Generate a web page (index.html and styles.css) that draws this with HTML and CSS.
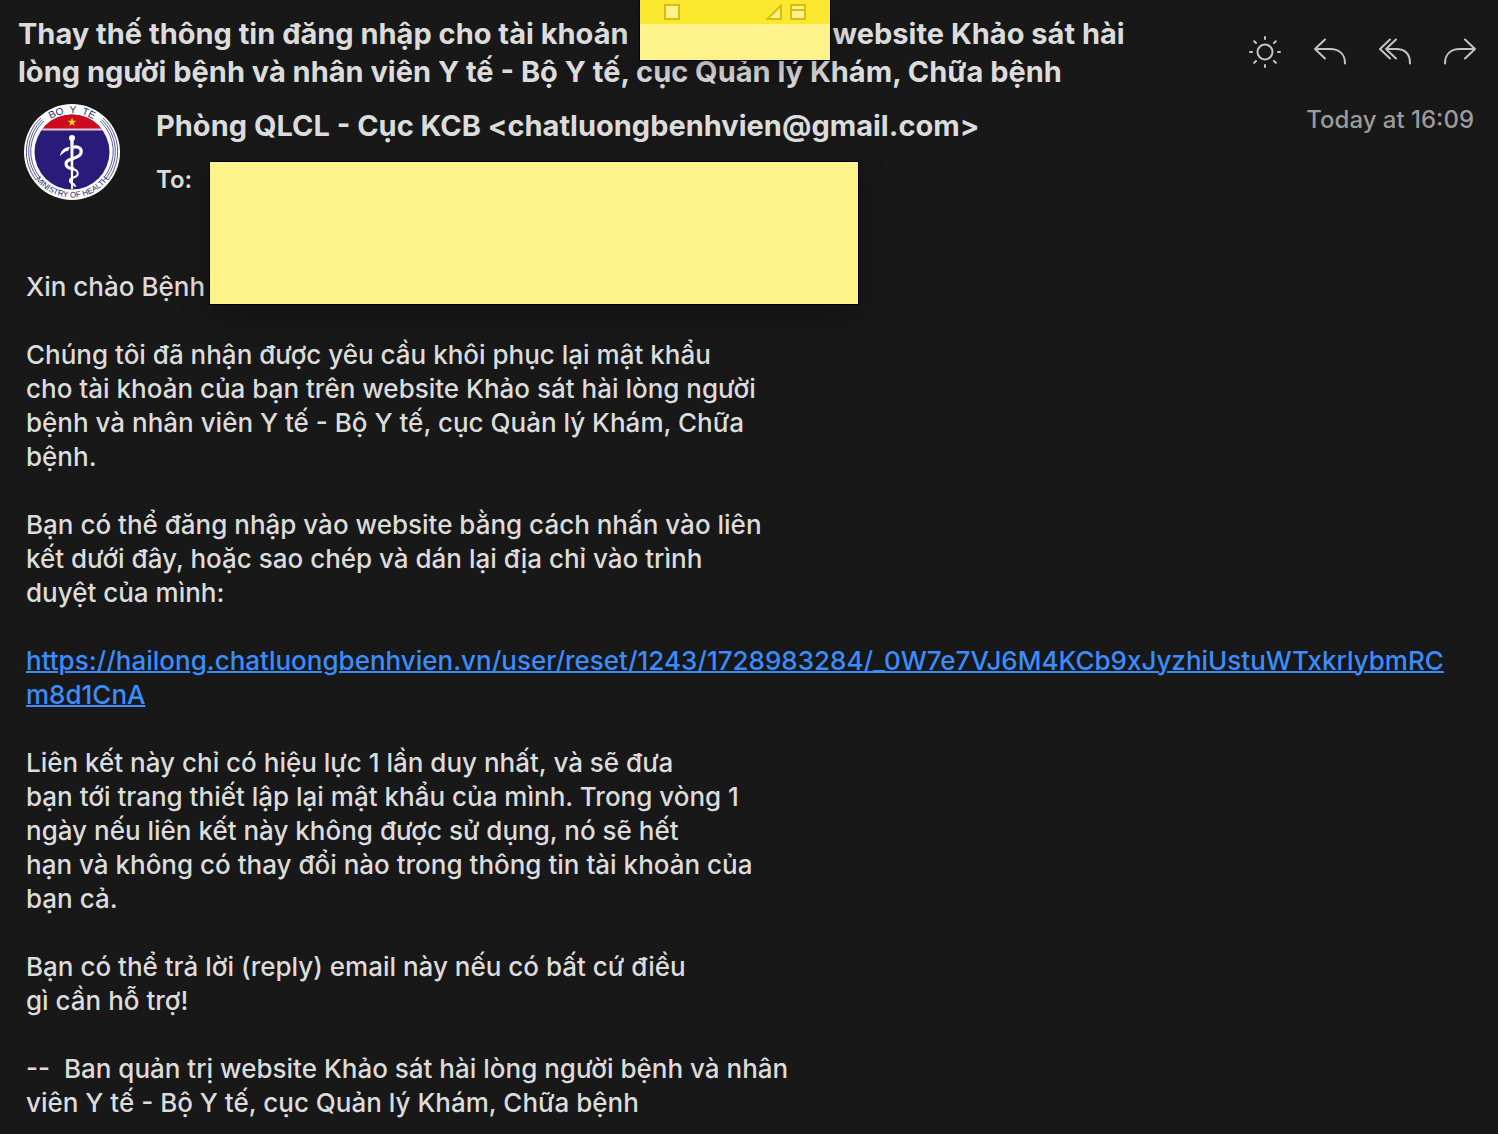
FILE: index.html
```html
<!DOCTYPE html>
<html lang="vi">
<head>
  <meta charset="UTF-8">
  <meta name="viewport" content="width=device-width, initial-scale=1.0">
  <title>Thay thế thông tin đăng nhập</title>
  <link rel="stylesheet" href="styles.css">
</head>
<body>
  <!-- Message header -->
  <header class="header">
    <div class="top">
      <h1 class="subject">Thay thế thông tin đăng nhập cho tài khoản<span class="gap"></span>website Khảo sát hài<br>lòng người bệnh và nhân viên Y tế - Bộ Y tế, cục Quản lý Khám, Chữa bệnh</h1>
      <div class="actions">
        <button type="button" aria-label="Light mode">
          <svg width="32" height="32" viewBox="0 0 32 32">
            <circle cx="16" cy="16" r="7.5"/>
            <path d="M16 1v2M16 29v2M1 16h2M29 16h2M5.200 5.200l1.800 1.800M25 25l1.800 1.800M5.200 26.800L7 25M25 7l1.800-1.800"/>
          </svg>
        </button>
        <button type="button" aria-label="Reply">
          <svg width="32" height="32" viewBox="0 0 32 32">
            <path d="M11 3.500L1 13l10 9.500M1 13h15c9 0 15 5 15 14.500"/>
          </svg>
        </button>
        <button type="button" aria-label="Reply all">
          <svg width="32" height="32" viewBox="0 0 32 32">
            <path d="M11 3.500L1 13l10 9.500M17 3.500L7 13l10 9.500M7 13h10c9 0 14 5 14 14.500"/>
          </svg>
        </button>
        <button type="button" aria-label="Forward">
          <svg width="32" height="32" viewBox="0 0 32 32">
            <path d="M21 3.500L31 13l-10 9.500M31 13H16C7 13 1 18 1 27.500"/>
          </svg>
        </button>
      </div>
    </div>

    <div class="meta">
      <svg class="avatar" width="96" height="96" viewBox="0 0 96 96" role="img" aria-label="Ministry of Health">
        <defs>
          <clipPath id="disc"><circle cx="48" cy="48" r="37.5"/></clipPath>
          <path id="arc-top" d="M9 48a39 39 0 0 1 78 0"/>
          <path id="arc-bottom" d="M2.500 48a45.500 45.500 0 0 0 91 0"/>
        </defs>
        <circle cx="48" cy="48" r="48" fill="#fff"/>
        <g fill="none" stroke="#5a5d9e" stroke-width="1">
          <path d="M17 14a46 46 0 0 0-5 62M18.500 15.500a43.700 43.700 0 0 0-4.500 59M20 17a41.400 41.400 0 0 0-4 56.500"/>
          <path d="M79 14a46 46 0 0 1 5 62M77.500 15.500a43.700 43.700 0 0 1 4.500 59M76 17a41.400 41.400 0 0 1 4 56.500"/>
        </g>
        <circle cx="48" cy="48" r="37.500" fill="#2a1a7a"/>
        <g clip-path="url(#disc)">
          <rect x="8" y="8" width="80" height="17" fill="#cf0a1e"/>
          <rect x="8" y="24.500" width="80" height="2" fill="#d9c9dd"/>
        </g>
        <path d="M48 13.500l1.100 3.200h3.300l-2.700 2 1 3.200-2.700-2-2.700 2 1-3.200-2.700-2h3.300z" fill="#ffe11a"/>
        <circle cx="48" cy="34" r="3" fill="#fff"/>
        <path d="M46.300 35h3.400l-.8 50h-1.800z" fill="#fff"/>
        <path d="M36 52c1-6 5-9 10-9l-2 4c-3 0-5 2-8 5z" fill="#fff"/>
        <path d="M50 43c5-1 8 2 7 6-1 6-15 5-15 10.500 0 4 4 5 7 5" fill="none" stroke="#fff" stroke-width="3.200" stroke-linecap="round"/>
        <path d="M49 65.500c5 0 6 5 3 7-3 1.500-7 1-6 5 .5 2 4 1.500 5 4.500" fill="none" stroke="#fff" stroke-width="2" stroke-linecap="round"/>
        <text class="seal-top"><textPath href="#arc-top" startOffset="50%">BO&nbsp; Y&nbsp; TE</textPath></text>
        <text class="seal-bottom"><textPath href="#arc-bottom" startOffset="50%">MINISTRY OF HEALTH</textPath></text>
      </svg>
      <div class="people">
        <p class="sender">Phòng QLCL - Cục KCB &lt;chatluongbenhvien@gmail.com&gt;</p>
        <p class="to">To:</p>
      </div>
      <time class="date">Today at 16:09</time>
    </div>
  </header>

  <!-- Message body -->
  <main class="message">
    <p>Xin chào Bệnh</p>
    <p>Chúng tôi đã nhận được yêu cầu khôi phục lại mật khẩu<br>cho tài khoản của bạn trên website Khảo sát hài lòng người<br>bệnh và nhân viên Y tế - Bộ Y tế, cục Quản lý Khám, Chữa<br>bệnh.</p>
    <p>Bạn có thể đăng nhập vào website bằng cách nhấn vào liên<br>kết dưới đây, hoặc sao chép và dán lại địa chỉ vào trình<br>duyệt của mình:</p>
    <p><a class="reset" href="https://hailong.chatluongbenhvien.vn/user/reset/1243/1728983284/_0W7e7VJ6M4KCb9xJyzhiUstuWTxkrlybmRCm8d1CnA">https://hailong.chatluongbenhvien.vn/user/reset/1243/1728983284/_0W7e7VJ6M4KCb9xJyzhiUstuWTxkrlybmRC<br>m8d1CnA</a></p>
    <p>Liên kết này chỉ có hiệu lực 1 lần duy nhất, và sẽ đưa<br>bạn tới trang thiết lập lại mật khẩu của mình. Trong vòng 1<br>ngày nếu liên kết này không được sử dụng, nó sẽ hết<br>hạn và không có thay đổi nào trong thông tin tài khoản của<br>bạn cả.</p>
    <p>Bạn có thể trả lời (reply) email này nếu có bất cứ điều<br>gì cần hỗ trợ!</p>
    <p>--&nbsp; Ban quản trị website Khảo sát hài lòng người bệnh và nhân<br>viên Y tế - Bộ Y tế, cục Quản lý Khám, Chữa bệnh</p>
  </main>

  <!-- Sticky notes lying over the window -->
  <aside class="note note-small">
    <div class="note-bar">
      <button type="button" aria-label="Close note">
        <svg width="16" height="16" viewBox="0 0 16 16"><path d="M1 1h14v14H1z"/></svg>
      </button>
      <button type="button" class="push" aria-label="Resize note">
        <svg width="16" height="16" viewBox="0 0 16 16"><path d="M15 1.500V15H1.500z"/></svg>
      </button>
      <button type="button" aria-label="Collapse note">
        <svg width="16" height="16" viewBox="0 0 16 16"><path d="M1 1h14v14H1zM1 6h14"/></svg>
      </button>
    </div>
  </aside>
  <aside class="note note-large"></aside>
</body>
</html>
```

FILE: styles.css
```css
* {
  box-sizing: border-box;
}

body {
  position: relative;
  margin: 0;
  background-color: #181818;
  color: #dcdcdc;
  font-family: Inter, "Liberation Sans", sans-serif;
  font-weight: 500;
}

h1, p {
  margin: 0;
}

button {
  display: flex;
  padding: 0;
  border: none;
  background: none;
  cursor: pointer;
}

/* Header */
.header {
  padding: 15px 22px 0 18px;
}

.top {
  display: flex;
  justify-content: space-between;
}

.subject {
  font-size: 29px;
  font-weight: 700;
  line-height: 38px;
  white-space: nowrap;
}

.gap {
  display: inline-block;
  width: 204px;
}

.actions {
  display: flex;
  gap: 33px;
  padding-top: 21px;
}

.actions svg {
  fill: none;
  stroke: #c4c4c4;
  stroke-width: 2;
  stroke-linecap: round;
  stroke-linejoin: round;
}

.meta {
  display: flex;
  align-items: flex-start;
  padding: 13px 2px 0 6px;
}

.avatar {
  flex: none;
}

.seal-top, .seal-bottom {
  fill: #1d1f78;
  font-family: "Liberation Sans", sans-serif;
  text-anchor: middle;
}

.seal-top {
  font-size: 10px;
}

.seal-bottom {
  font-size: 8px;
}

.people {
  flex: 1;
  padding-left: 36px;
}

.sender {
  font-size: 29px;
  font-weight: 700;
  line-height: 44px;
}

.to {
  padding-top: 16px;
  font-size: 24px;
  font-weight: 600;
  line-height: 32px;
}

.date {
  color: #9b9b9b;
  font-size: 24px;
  line-height: 32px;
}

/* Message */
.message {
  display: flex;
  flex-direction: column;
  gap: 34px;
  padding: 70px 26px 14px;
  font-size: 26px;
  line-height: 34px;
  white-space: nowrap;
}

.reset {
  color: #3b8cff;
  text-decoration-thickness: 2px;
}

/* Sticky notes */
.note {
  position: absolute;
  background-color: #fef28b;
  outline: 1px solid #000;
  box-shadow: 0 10px 30px rgba(0, 0, 0, 0.25);
}

.note-small {
  top: 0;
  left: 640px;
  width: 190px;
  height: 60px;
}

.note-large {
  top: 162px;
  left: 210px;
  width: 648px;
  height: 142px;
}

.note-bar {
  display: flex;
  gap: 8px;
  height: 24px;
  padding: 4px 24px;
  background-color: #fce92f;
}

.note-bar svg {
  fill: #fef28b;
  stroke: #d6bd0e;
  stroke-width: 2;
}

.push {
  margin-left: auto;
}
```
